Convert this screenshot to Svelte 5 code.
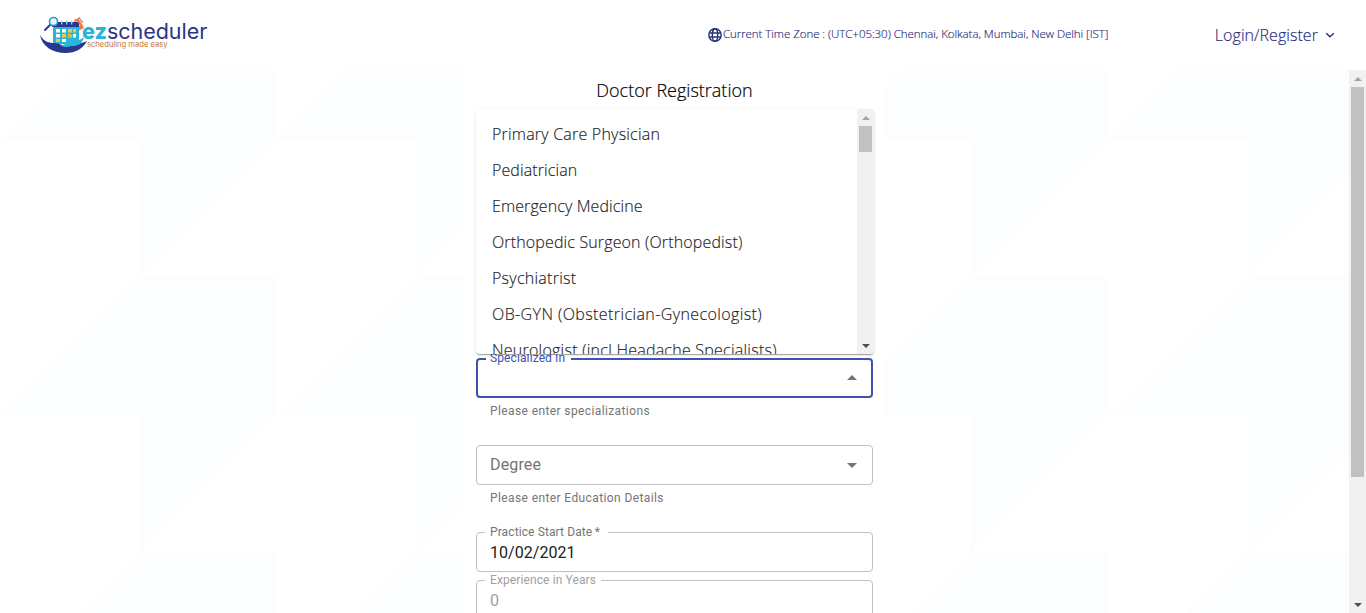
<script>
  const options = [
    { name: 'Primary Care Physician', tracking: 0.21 },
    { name: 'Pediatrician', tracking: 0.1 },
    { name: 'Emergency Medicine', tracking: 0.1 },
    { name: 'Orthopedic Surgeon (Orthopedist)', tracking: 0.14 },
    { name: 'Psychiatrist', tracking: 0.25 },
    { name: 'OB-GYN (Obstetrician-Gynecologist)', tracking: 0.4 },
    { name: 'Neurologist (incl Headache Specialists)', tracking: 0.24 },
  ];
</script>

<div class="page">
  <header>
    <div class="brand">
      <svg class="mark" width="50" height="38" viewBox="0 0 50 38">
        <path d="M34 4l6-3 1 3 2 1-1 3 2 4-6 3z" fill="#f0794a" />
        <path d="M36 5l4 5M39 3l3 5" stroke="#fff" stroke-width=".7" />
        <rect x="13" y="8" width="26" height="20" rx="1.5" fill="#29b4dc" />
        <path d="M14 6h23q2 0 2 2v3H12V8q0-2 2-2z" fill="#28388f" />
        <g fill="#8fd3ee">
          <rect x="16" y="4.5" width="1.4" height="4" /><rect x="21" y="4.5" width="1.4" height="4" /><rect x="26" y="4.5" width="1.4" height="4" /><rect x="31" y="4.5" width="1.4" height="4" />
        </g>
        <g fill="#fff">
          <rect x="16" y="13" width="4" height="3.5" /><rect x="22" y="13" width="4" height="3.5" /><rect x="16" y="18" width="4" height="3.5" /><rect x="33" y="18" width="3" height="3.5" /><rect x="22" y="23" width="4" height="3" />
        </g>
        <g fill="#f5c83b">
          <rect x="28" y="13" width="4" height="3.5" /><rect x="33" y="13" width="3" height="3.5" /><rect x="22" y="18" width="4" height="3.5" /><rect x="28" y="18" width="4" height="3.5" /><rect x="16" y="23" width="4" height="3" />
        </g>
        <path d="M28.500 19.500l1.200 1.200 2.300-3" fill="none" stroke="#f0794a" stroke-width="1" />
        <path d="M0 19c4 7 9 8 15 8 6 1 9 4 14 2 5-1 12-1 18-4-4 8-12 12-21 12C12 37 2 30 0 19z" fill="#28388f" />
        <path d="M20 29c5 1 7-4 13-4 5 0 7-1 11-4-2 7-6 9-12 9-5 1-8 2-12-1z" fill="#29b4dc" />
        <path d="M5 14l5-5" stroke="#28388f" stroke-width="2" stroke-linecap="round" />
        <circle cx="13.500" cy="5.500" r="4" fill="#e9f8fd" stroke="#2a9bca" stroke-width="1.6" />
      </svg>
      <div class="words">
        <div class="name"><b>ez</b>scheduler</div>
        <div class="tag">scheduling made easy</div>
      </div>
    </div>
    <div class="zone">
      <svg width="16" height="16" viewBox="0 0 16 16" fill="none" stroke="#28327c" stroke-width="1.4">
        <circle cx="8" cy="8" r="6.2" /><ellipse cx="8" cy="8" rx="2.7" ry="6.2" /><path d="M2 6h12M2 10h12" />
      </svg>
      <span>Current Time Zone : (UTC+05:30) Chennai, Kolkata, Mumbai, New Delhi [IST]</span>
    </div>
    <div class="login">
      <span>Login/Register</span>
      <svg width="10" height="8" viewBox="0 0 10 8" fill="none" stroke="#28327c" stroke-width="1.4"><path d="M1.200 2.200L5 5.700l3.800-3.500" /></svg>
    </div>
  </header>

  <div class="body">
    <main>
      <svg class="pattern" width="1349" height="543">
        <defs>
          <pattern id="blocks" width="277" height="277" y="-70" patternUnits="userSpaceOnUse">
            <path d="M139 0H277V139L139 277V139H0z" fill="#fbfdff" />
          </pattern>
        </defs>
        <rect width="1349" height="543" fill="url(#blocks)" />
      </svg>
      <section class="panel">
        <h1>Doctor Registration</h1>
        <div class="field active">
          <span class="label">Specialized In</span>
          <i class="arrow up"></i>
          <div class="menu">
            <ul>
              {#each options as o}
                <li style="letter-spacing:{o.tracking}px">{o.name}</li>
              {/each}
            </ul>
            <div class="scroll">
              <i class="tri top"></i>
              <div class="thumb"></div>
              <i class="tri bottom"></i>
            </div>
          </div>
        </div>
        <p class="help">Please enter specializations</p>
        <div class="field degree">
          <span class="value placeholder">Degree</span>
          <i class="arrow down"></i>
        </div>
        <p class="help">Please enter Education Details</p>
        <div class="field date">
          <span class="label">Practice Start Date&thinsp;<span>*</span></span>
          <span class="value">10/02/2021</span>
        </div>
        <div class="field years">
          <span class="label">Experience in Years</span>
          <span class="value">0</span>
        </div>
      </section>
    </main>
    <div class="scroll">
      <i class="tri top"></i>
      <div class="thumb long"></div>
      <i class="tri bottom"></i>
    </div>
  </div>
</div>

<style>
  :global(body) { margin: 0; overflow: hidden; }
  .page { width: 1366px; height: 613px; overflow: hidden; display: flex; flex-direction: column; background: #fff; font-family: "Open Sans", sans-serif; font-weight: 300; }
  header { height: 70px; flex: none; display: flex; align-items: center; box-sizing: border-box; padding: 0 31px 0 40px; color: #1f2a78; }
  .brand { display: flex; width: 667px; height: 38px; }
  .mark { flex: none; }
  .words { margin-left: -8px; font-family: Inter, sans-serif; }
  .name { font-size: 21.5px; line-height: 26px; margin-top: 2px; color: #2b3487; font-weight: 400; letter-spacing: -.03px; white-space: nowrap; }
  .name b { color: #29b4dc; font-weight: 800; }
  .tag { font-size: 7.6px; line-height: 8px; margin: -3px 0 0 5px; color: #c8752f; font-weight: 400; white-space: nowrap; }
  .zone { display: flex; align-items: center; width: 508px; font-size: 11.5px; letter-spacing: -.05px; white-space: nowrap; line-height: 16px; }
  .zone span { -webkit-text-stroke: .15px; margin-top: -2px; }
  .login { display: flex; align-items: center; font-size: 16px; letter-spacing: .05px; gap: 7px; white-space: nowrap; -webkit-text-stroke: .15px; }
  .body { flex: 1; display: flex; min-height: 0; }
  main { position: relative; flex: 1; overflow: hidden; display: flex; padding-left: 465px; }
  .pattern { position: absolute; inset: 0; }
  .panel { position: relative; width: 420px; height: 560px; box-sizing: border-box; padding: 7px 12px 0 11px; background: #fff; }
  h1 { margin: 0 0 255px; font-size: 18px; line-height: 26px; font-weight: 300; text-align: center; color: #000; -webkit-text-stroke: .2px; }
  .field { position: relative; box-sizing: border-box; height: 40px; border: 1px solid #c0c0c0; border-radius: 4px; font-family: Roboto, sans-serif; font-weight: 400; padding: 0 13px; display: flex; align-items: center; justify-content: space-between; font-size: 16px; color: #212121; }
  .field.active { border: 2px solid #3f51b5; padding: 0 12px; justify-content: flex-end; }
  .label { position: absolute; left: 8px; top: -9px; padding: 0 5px; background: #fff; font-size: 12px; line-height: 16px; letter-spacing: .11px; color: #757575; white-space: nowrap; }
  .active .label { padding: 0 6px 0 4px; top: -10px; color: #3f51b5; }
  .date .label { padding-right: 8px; }
  .placeholder { color: #757575; letter-spacing: .15px; margin-top: -2px; }
  .arrow { width: 0; height: 0; border: 5px solid transparent; margin-right: 2px; }
  .arrow.up { border-top: 0; border-bottom-color: #757575; margin-bottom: 2px; }
  .arrow.down { border-bottom: 0; border-top-color: #757575; }
  .help { margin: 5px 14px 25px; font-family: Roboto, sans-serif; font-weight: 400; font-size: 12px; line-height: 17px; letter-spacing: .39px; color: #757575; }
  .date .value, .years .value { letter-spacing: .05px; }
  .years { margin-top: 8px; }
  .years .label, .years .value { color: #a0a0a0; }
  .menu { position: absolute; left: -2px; bottom: 38px; width: 398px; height: 245px; display: flex; background: #fff; border-radius: 4px; overflow: hidden; box-shadow: 0 2px 1px -1px rgba(0,0,0,.2), 0 1px 1px rgba(0,0,0,.14), 0 1px 3px rgba(0,0,0,.12); z-index: 2; margin-bottom: 4px; }
  ul { flex: 1; margin: 0; padding: 7px 0 0; list-style: none; overflow: hidden; font-family: "Open Sans", sans-serif; font-weight: 300; }
  li { height: 36px; line-height: 36px; padding-left: 16px; color: #222; white-space: nowrap; -webkit-text-stroke: .15px; }
  .scroll { width: 17px; flex: none; background: #f1f1f1; display: flex; flex-direction: column; align-items: center; }
  .thumb { width: 13px; height: 26px; background: #c1c1c1; margin-top: 6px; }
  .thumb.long { height: 390px; }
  .tri { width: 0; height: 0; border: 4px solid transparent; }
  .tri.top { border-top: 0; border-bottom-color: #a3a3a3; margin-top: 7px; }
  .tri.bottom { border-bottom: 0; border-top-color: #505050; margin: auto 0 6px; }
</style>
